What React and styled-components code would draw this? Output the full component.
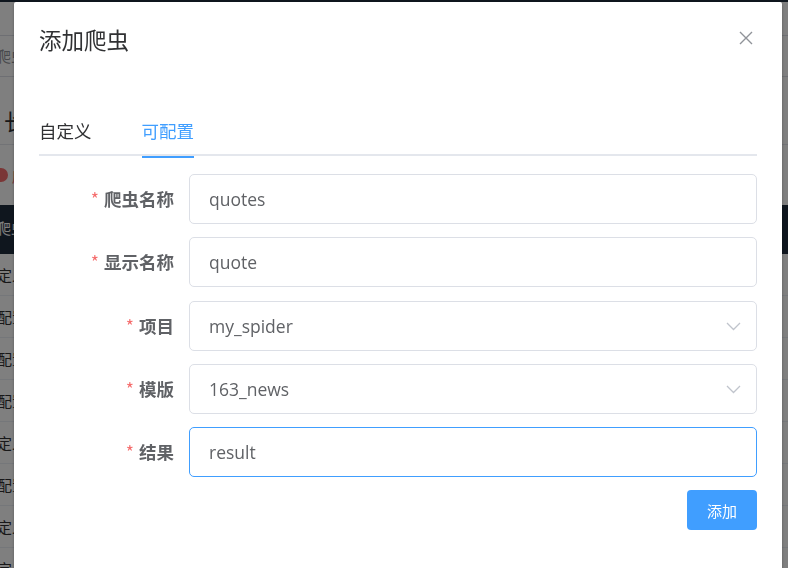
import React from 'react';
import styled, { createGlobalStyle } from 'styled-components';

const GlobalStyle = createGlobalStyle`
  html, body {
    margin: 0;
    padding: 0;
    height: 100%;
    overflow: hidden;
  }
  body {
    font-family: "Open Sans", "Noto Sans CJK SC", sans-serif;
    color: #606266;
  }
`;

/* page behind the dialog (dimmed) */
const Page = styled.div`
  height: 568px;
  overflow: hidden;
  background: #fff;
  display: flex;
  flex-direction: column;
  font-family: "Noto Sans CJK SC", sans-serif;
`;

const TopStrip = styled.div`
  flex: none;
  height: 2px;
  background: #1f2d3d;
`;

const Crumb = styled.div`
  flex: none;
  margin-top: 33px;
  height: 40px;
  line-height: 40px;
  border-top: 1px solid #dcdfe6;
  border-bottom: 1px solid #dcdfe6;
  font-size: 15px;
  color: #909399;
  white-space: nowrap;
  span { margin-left: -4px; }
`;

const PageTitle = styled.div`
  flex: none;
  height: 67px;
  line-height: 86px;
  font-size: 22px;
  color: #303133;
  border-bottom: 1px solid #e4e7ed;
  white-space: nowrap;
  span { margin-left: 4px; }
`;

const Notice = styled.div`
  flex: none;
  height: 60px;
  display: flex;
  align-items: center;
  gap: 4px;
  font-size: 15px;
  color: #f56c6c;
  white-space: nowrap;
`;

const NoticeDot = styled.i`
  display: block;
  width: 14px;
  height: 14px;
  margin-left: -6px;
  border-radius: 50%;
  background: #f56c6c;
`;

const TableHead = styled.div`
  flex: none;
  height: 49px;
  line-height: 46px;
  background: #1f2d3d;
  color: #fff;
  font-size: 15px;
  white-space: nowrap;
  span { margin-left: -4px; }
`;

const TableRow = styled.div`
  flex: none;
  height: 41px;
  line-height: 41px;
  border-bottom: 1px solid #ebeef5;
  font-size: 15px;
  color: #303133;
  white-space: nowrap;
  span { margin-left: -18px; }
`;

/* dialog */
const Overlay = styled.div`
  position: fixed;
  inset: 0;
  background: rgba(0, 0, 0, 0.5);
`;

const Dialog = styled.div`
  position: fixed;
  top: 2px;
  left: 14px;
  width: 768px;
  height: 620px;
  background: #fff;
  border-radius: 2px;
  box-shadow: 0 1px 3px rgba(0, 0, 0, 0.3);
  box-sizing: border-box;
`;

const Header = styled.div`
  position: relative;
  padding: 22px 25px 12px;
`;

const Title = styled.span`
  font-family: "Noto Sans CJK SC", sans-serif;
  font-size: 22.5px;
  line-height: 30px;
  color: #303133;
`;

const CloseButton = styled.button`
  position: absolute;
  top: 29px;
  right: 29px;
  padding: 0;
  border: 0;
  background: transparent;
  display: flex;
  cursor: pointer;
`;

const Body = styled.div`
  padding: 40px 25px 30px;
`;

const Tabs = styled.div`
  display: flex;
  height: 50px;
  border-bottom: 2px solid #e4e7ed;
  margin-bottom: 18px;
  box-sizing: border-box;
`;

const Tab = styled.div`
  position: relative;
  padding: 0 25px;
  height: 50px;
  line-height: 49px;
  font-family: "Noto Sans CJK SC", sans-serif;
  font-size: 17.5px;
  color: ${p => (p.$active ? '#409eff' : '#303133')};
  &:first-child { padding-left: 0; }
  &::after {
    content: '';
    display: ${p => (p.$active ? 'block' : 'none')};
    position: absolute;
    left: 25px;
    right: 25px;
    bottom: -2px;
    height: 2px;
    background: #409eff;
  }
`;

const FormItem = styled.div`
  display: flex;
  margin-bottom: 13.3px;
`;

const Label = styled.label`
  width: 150px;
  flex: none;
  box-sizing: border-box;
  padding-right: 15px;
  text-align: right;
  line-height: 50px;
  font-family: "Noto Sans CJK SC", sans-serif;
  font-size: 17.5px;
  font-weight: 700;
  color: #606266;
  &::before {
    content: '*';
    color: #f56c6c;
    font-weight: 400;
    margin-right: 5px;
  }
`;

const Field = styled.div`
  position: relative;
  flex: 1;
  height: 50px;
  display: flex;
  align-items: center;
  box-sizing: border-box;
  padding: 0 19px;
  border: 1px solid ${p => (p.$focused ? '#409eff' : '#dcdfe6')};
  border-radius: 5px;
  font-size: 17.5px;
  color: #606266;
`;

const Arrow = styled.svg`
  position: absolute;
  right: 15px;
  top: 20px;
`;

const Footer = styled.div`
  display: flex;
  justify-content: flex-end;
`;

const Button = styled.button`
  width: 70px;
  height: 40px;
  border: 0;
  border-radius: 4px;
  background: #409eff;
  color: #fff;
  font-family: "Noto Sans CJK SC", sans-serif;
  font-size: 15px;
  cursor: pointer;
`;

const rows = ['自定义', '可配置', '可配置', '可配置', '自定义', '可配置', '自定义', '自定义'];

const fields = [
  { label: '爬虫名称', value: 'quotes' },
  { label: '显示名称', value: 'quote' },
  { label: '项目', value: 'my_spider', select: true },
  { label: '模版', value: '163_news', select: true },
  { label: '结果', value: 'result', focused: true },
];

export default function App() {
  return (
    <>
      <GlobalStyle />
      <Page>
        <TopStrip />
        <Crumb><span>爬虫</span></Crumb>
        <PageTitle><span>长</span></PageTitle>
        <Notice><NoticeDot />爬虫</Notice>
        <TableHead><span>爬虫</span></TableHead>
        {rows.map((r, i) => (
          <TableRow key={i}><span>{r}</span></TableRow>
        ))}
      </Page>
      <Overlay />
      <Dialog>
        <Header>
          <Title>添加爬虫</Title>
          <CloseButton aria-label="关闭">
            <svg width="14" height="14" viewBox="0 0 14 14">
              <path d="M1 1L13 13M13 1L1 13" stroke="#909399" strokeWidth="1.4" fill="none" />
            </svg>
          </CloseButton>
        </Header>
        <Body>
          <Tabs>
            <Tab>自定义</Tab>
            <Tab $active>可配置</Tab>
          </Tabs>
          {fields.map(f => (
            <FormItem key={f.label}>
              <Label>{f.label}</Label>
              <Field $focused={f.focused}>
                {f.value}
                {f.select && (
                  <Arrow width="15" height="9" viewBox="0 0 15 9">
                    <path d="M1 1L7.5 7.5L14 1" stroke="#c0c4cc" strokeWidth="1.3" fill="none" />
                  </Arrow>
                )}
              </Field>
            </FormItem>
          ))}
          <Footer>
            <Button>添加</Button>
          </Footer>
        </Body>
      </Dialog>
    </>
  );
}
